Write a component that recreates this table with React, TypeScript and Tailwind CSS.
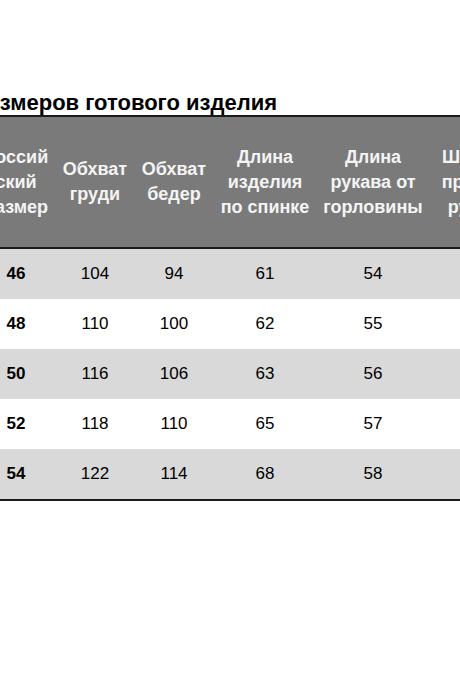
import React from 'react';

const columns = [
  ['Россий', 'ский', 'размер'],
  ['Обхват', 'груди'],
  ['Обхват', 'бедер'],
  ['Длина', 'изделия', 'по спинке'],
  ['Длина', 'рукава от', 'горловины'],
  ['Ширина', 'проймы', 'рукава'],
];

const rows = [
  ['46', '104', '94', '61', '54', ''],
  ['48', '110', '100', '62', '55', ''],
  ['50', '116', '106', '63', '56', ''],
  ['52', '118', '110', '65', '57', ''],
  ['54', '122', '114', '68', '58', ''],
];

const grid = 'grid grid-cols-[80px_78px_80px_102px_114px_96px]';

function HeaderCell({ lines }: { lines: string[] }) {
  return (
    <div className="flex flex-col items-center justify-center text-center text-[18px] font-bold leading-[25px] text-[#f4f4f4]">
      {lines.map((l) => (
        <span key={l} className="whitespace-nowrap">
          {l}
        </span>
      ))}
    </div>
  );
}

export default function App() {
  return (
    <div className="w-[460px] h-[690px] overflow-hidden bg-white font-['Liberation_Sans',Arial,sans-serif] text-black">
      <div className="pt-[91px]">
        {/* Title: right end sits at 276px, the start runs off the left edge */}
        <div className="flex h-[24px] w-[277px] justify-end whitespace-nowrap text-[22px] font-bold leading-[24px]">
          <span>Таблица размеров готового изделия</span>
        </div>

        <div className="ml-[-24px] w-[550px] border-y-2 border-[#1a1a1a]">
          {/* Header */}
          <div className={`${grid} h-[132px] border-b-2 border-[#1a1a1a] bg-[#7a7a7a]`}>
            {columns.map((c, i) => (
              <HeaderCell key={i} lines={c} />
            ))}
          </div>

          {/* Body */}
          {rows.map((r, ri) => (
            <div
              key={r[0]}
              className={`${grid} h-[50px] items-center text-[17px] ${ri % 2 === 0 ? 'bg-[#d9d9d9]' : 'bg-white'}`}
            >
              {r.map((v, ci) => (
                <div key={ci} className={`text-center ${ci === 0 ? 'font-bold' : ''}`}>
                  {v}
                </div>
              ))}
            </div>
          ))}
        </div>
      </div>
    </div>
  );
}
